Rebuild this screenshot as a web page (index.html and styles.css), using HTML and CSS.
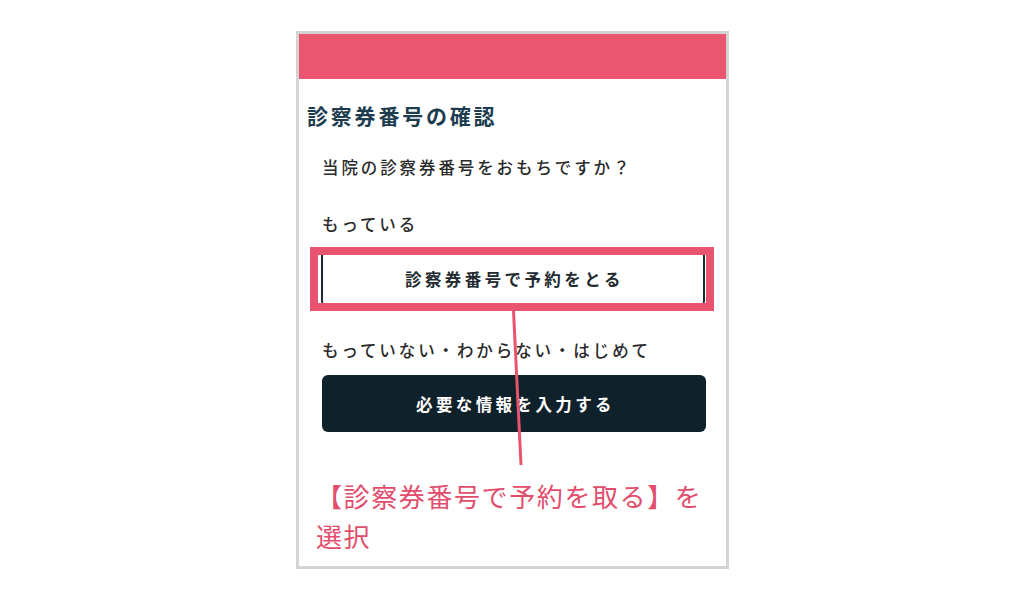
FILE: index.html
```html
<!DOCTYPE html>
<html lang="ja">
<head>
<meta charset="utf-8">
<title>診察券番号の確認</title>
<link rel="stylesheet" href="styles.css">
</head>
<body>
<div class="frame">
  <div class="topbar"></div>
  <h1 class="title">診察券番号の確認</h1>
  <p class="question">当院の診察券番号をおもちですか？</p>
  <p class="label label-have">もっている</p>
  <div class="btn-wrap">
    <button class="btn btn-outline">診察券番号で予約をとる</button>
    <div class="highlight"></div>
  </div>
  <p class="label label-none">もっていない・わからない・はじめて</p>
  <button class="btn btn-dark">必要な情報を入力する</button>
  <p class="caption">【診察券番号で予約を取る】を選択</p>
  <svg class="pointer" width="427" height="532" viewBox="0 0 427 532">
    <line x1="214.5" y1="277" x2="222" y2="431" stroke="#e8546f" stroke-width="3"/>
  </svg>
</div>
</body>
</html>
```
FILE: styles.css
```css
html, body {
  margin: 0;
  padding: 0;
  background: #ffffff;
}
body {
  font-family: "Noto Sans CJK JP", "Noto Sans", sans-serif;
  padding: 31px 0 0 296px;
}
.frame {
  position: relative;
  width: 427px;
  height: 532px;
  border: 3px solid #d4d4d4;
  background: #ffffff;
  display: flex;
  flex-direction: column;
  align-items: flex-start;
}
.topbar {
  align-self: stretch;
  height: 45px;
  background: #ea566f;
}
.title {
  margin: 21px 0 0 8px;
  font-size: 21px;
  line-height: 30px;
  font-weight: 700;
  letter-spacing: 2.8px;
  color: #1d3c4f;
}
.question, .label {
  margin: 0 0 0 23px;
  font-size: 16.5px;
  line-height: 26px;
  font-weight: 500;
  letter-spacing: 2.9px;
  color: #2a2a2a;
}
.question { margin-top: 24px; }
.label-have { margin-top: 31px; }
.label-none { margin-top: 30px; }
.btn-wrap {
  position: relative;
  margin: 13px 0 0 22px;
  width: 384px;
}
.btn {
  display: flex;
  align-items: center;
  justify-content: center;
  box-sizing: border-box;
  width: 384px;
  height: 57px;
  border-radius: 6px;
  font-family: "Noto Sans CJK JP", "Noto Sans", sans-serif;
  font-size: 16.5px;
  font-weight: 700;
  letter-spacing: 3.4px;
  padding: 0 0 0 3px;
}
.btn-outline {
  background: #ffffff;
  border: 2px solid #1b2b34;
  color: #222a30;
}
.btn-dark {
  margin: 12px 0 0 23px;
  background: #0f212a;
  border: none;
  color: #ffffff;
}
.highlight {
  position: absolute;
  left: -11px;
  right: -9px;
  top: -3px;
  bottom: -4px;
  border: 8px solid #e8546f;
}
.caption {
  margin: 44px 0 0 17px;
  width: 393px;
  font-size: 26px;
  line-height: 40px;
  letter-spacing: 1.6px;
  color: #e24d6c;
}
.pointer {
  position: absolute;
  left: 0;
  top: 0;
  pointer-events: none;
}
```
